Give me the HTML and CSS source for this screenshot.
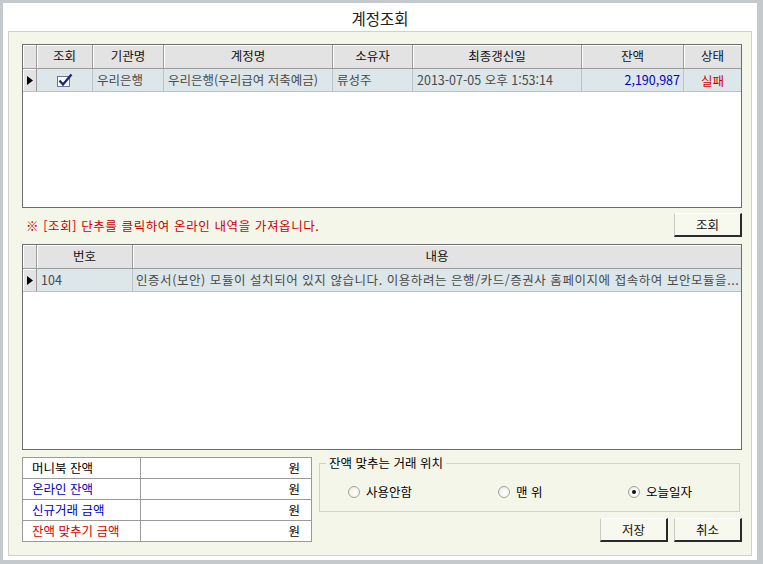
FILE: index.html
```html
<!DOCTYPE html>
<html lang="ko">
<head>
<meta charset="utf-8">
<title>계정조회</title>
<link rel="stylesheet" href="styles.css">
</head>
<body>
<div class="dialog">
  <div class="title">계정조회</div>
  <div class="panel">
    <div class="grid grid1">
      <div class="row head">
        <div class="c rh"></div>
        <div class="c">조회</div>
        <div class="c">기관명</div>
        <div class="c">계정명</div>
        <div class="c">소유자</div>
        <div class="c">최종갱신일</div>
        <div class="c">잔액</div>
        <div class="c">상태</div>
      </div>
      <div class="row data">
        <div class="c rh"><svg width="6" height="9" viewBox="0 0 6 9"><polygon points="0,0 6,4.5 0,9" fill="#000"/></svg></div>
        <div class="c center"><svg width="17" height="15" viewBox="0 0 17 15"><rect x="1.5" y="3.5" width="12" height="10" fill="#fff" stroke="#6b7396"/><path d="M3.5 7.5 L7 11.5 L15.5 1.5" fill="none" stroke="#1c2a78" stroke-width="2.4"/></svg></div>
        <div class="c">우리은행</div>
        <div class="c">우리은행(우리급여 저축예금)</div>
        <div class="c">류성주</div>
        <div class="c">2013-07-05 오후 1:53:14</div>
        <div class="c right blue">2,190,987</div>
        <div class="c center red">실패</div>
      </div>
    </div>

    <div class="msgrow">
      <div class="msg">※ [조회] 단추를 클릭하여 온라인 내역을 가져옵니다.</div>
      <button class="btn">조회</button>
    </div>

    <div class="grid grid2">
      <div class="row head">
        <div class="c rh"></div>
        <div class="c">번호</div>
        <div class="c">내용</div>
      </div>
      <div class="row data">
        <div class="c rh"><svg width="6" height="9" viewBox="0 0 6 9"><polygon points="0,0 6,4.5 0,9" fill="#000"/></svg></div>
        <div class="c">104</div>
        <div class="c content">인증서(보안) 모듈이 설치되어 있지 않습니다. 이용하려는 은행/카드/증권사 홈페이지에 접속하여 보안모듈을...</div>
      </div>
    </div>

    <div class="bottom">
      <div class="sums">
        <div class="srow"><div class="lbl">머니북 잔액</div><div class="val">원</div></div>
        <div class="srow"><div class="lbl blue">온라인 잔액</div><div class="val">원</div></div>
        <div class="srow"><div class="lbl blue">신규거래 금액</div><div class="val">원</div></div>
        <div class="srow"><div class="lbl red">잔액 맞추기 금액</div><div class="val">원</div></div>
      </div>
      <div class="rightcol">
        <fieldset class="group">
          <legend>잔액 맞추는 거래 위치</legend>
          <div class="radios">
            <label class="radio r1"><span class="dot"></span>사용안함</label>
            <label class="radio r2"><span class="dot"></span>맨 위</label>
            <label class="radio r3"><span class="dot on"></span>오늘일자</label>
          </div>
        </fieldset>
        <div class="btns">
          <button class="btn">저장</button>
          <button class="btn">취소</button>
        </div>
      </div>
    </div>
  </div>
</div>
</body>
</html>
```
FILE: styles.css
```css
* { box-sizing: border-box; }
html, body { margin: 0; padding: 0; }
body {
  width: 763px;
  height: 564px;
  background: #c3c9cc;
  padding: 3px 5px 3px 3px;
  font-family: "Noto Sans CJK KR", "Noto Sans", sans-serif;
  font-size: 12px;
  color: #000;
  overflow: hidden;
}
.dialog {
  width: 755px;
  height: 558px;
  background: #fff;
  border-right: 1px solid #c8c8c8;
  border-bottom: 1px solid #c8c8c8;
  display: flex;
  flex-direction: column;
}
.title {
  height: 28px;
  display: flex;
  align-items: center;
  justify-content: center;
  font-size: 15.5px;
  color: #222;
  padding-top: 1px;
}
.panel {
  margin: 0 5px 4px 5px;
  flex: 1;
  background: #f5f6ea;
  border: 1px solid #d2d2cc;
  padding: 12px 9px 0 13px;
  display: flex;
  flex-direction: column;
}
.grid {
  border: 1px solid #6c6c6c;
  background: #fff;
}
.grid1 { height: 164px; }
.grid2 { height: 206px; margin-top: 7px; }
.row { display: grid; }
.grid1 .row { grid-template-columns: 14px 56px 71px 169px 80px 169px 102px 57px; }
.grid2 .row { grid-template-columns: 14px 96px 608px; }
.row.head { height: 24px; background: #e3e3e3; }
.row.head .c {
  border-right: 1px solid #9c9c9c;
  border-bottom: 1px solid #9c9c9c;
  box-shadow: inset 1px 1px 0 #fff;
  text-align: center;
  line-height: 22px;
  color: #111;
  font-size: 12.5px;
}
.row.head .c:last-child { border-right: none; }
.row.data { height: 23px; background: #dde6e9; }
.row.data .c {
  border-right: 1px solid #b9c2c6;
  border-bottom: 1px solid #b9c2c6;
  line-height: 21px;
  padding: 0 4px;
  color: #4a4a4a;
  white-space: nowrap;
  overflow: hidden;
  font-size: 12.5px;
}
.row.data .c:last-child { border-right: none; }
.row.data .c.rh {
  background: #e3e3e3;
  padding: 0;
  display: flex;
  align-items: center;
  justify-content: center;
  border-right-color: #9c9c9c;
  box-shadow: inset 1px 1px 0 #fff;
}
.c.center { text-align: center; }
.row.data .c.center { display: flex; align-items: center; justify-content: center; }
.c.right { text-align: right; }
.row.data .c.content { letter-spacing: 0.55px; padding-left: 3px; padding-right: 2px; }
.blue { color: #0000c0 !important; }
.red { color: #d40000 !important; }
.row.data .c.right { padding-right: 3px; }

.msgrow {
  margin-top: 5px;
  height: 24px;
  display: flex;
  align-items: center;
  justify-content: space-between;
}
.msg { color: #cc0000; padding-left: 4px; padding-top: 1px; font-size: 12.5px; letter-spacing: 0.6px; }
.btn {
  width: 68px;
  height: 24px;
  font-family: inherit;
  font-size: 12.5px;
  color: #111;
  background: #f7f8ee;
  border: 1px solid;
  border-color: #ffffff #2a2a2a #2a2a2a #c9c9c0;
  border-width: 1px 2px 2px 1px;
  padding: 0;
}
.bottom {
  margin-top: 6px;
  display: flex;
  gap: 7px;
}
.sums {
  margin-top: 1px;
  width: 290px;
  height: 85px;
  border: 1px solid #9a9a9a;
  background: #fff;
}
.srow {
  display: grid;
  grid-template-columns: 118px 1fr;
  height: 21px;
  border-bottom: 1px solid #9a9a9a;
  font-size: 12.5px;
}
.srow:last-child { border-bottom: none; height: 20px; }
.lbl {
  border-right: 1px solid #9a9a9a;
  padding-left: 9px;
  line-height: 20px;
}
.val { text-align: right; padding-right: 11px; line-height: 20px; }
.rightcol {
  width: 423px;
  display: flex;
  flex-direction: column;
}
.group {
  margin: 0;
  width: 421px;
  height: 56px;
  border: 1px solid #d3d99a;
  padding: 0;
}
.group legend {
  padding: 0 3px;
  margin-left: 6px;
  line-height: 14px;
  font-size: 12.5px;
}
.radios {
  position: relative;
  height: 40px;
}
.radio {
  position: absolute;
  top: 14px;
  display: flex;
  align-items: center;
  gap: 6px;
  line-height: 16px;
  font-size: 12.5px;
}
.r1 { left: 28px; }
.r2 { left: 178px; }
.r3 { left: 308px; }
.dot {
  width: 12px;
  height: 12px;
  border-radius: 50%;
  border: 1px solid #a4a49c;
  background: radial-gradient(circle at 60% 60%, #ffffff 0, #f2f2ee 60%, #dcdcd4 100%);
  display: inline-flex;
  align-items: center;
  justify-content: center;
}
.dot.on::after {
  content: "";
  width: 4px;
  height: 4px;
  border-radius: 50%;
  background: #111;
}
.btns {
  margin-top: 6px;
  display: flex;
  justify-content: flex-end;
  gap: 6px;
}
.btns .btn { height: 24px; }
```
